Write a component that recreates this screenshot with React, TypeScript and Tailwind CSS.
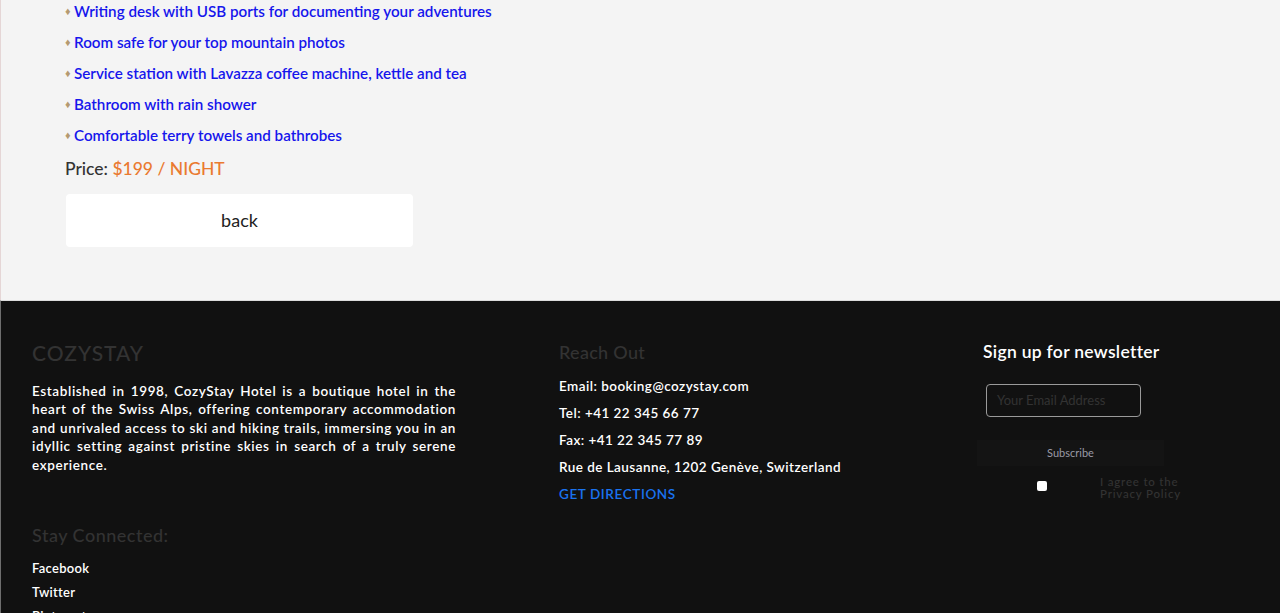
import React from "react";

const items = [
  "Writing desk with USB ports for documenting your adventures",
  "Room safe for your top mountain photos",
  "Service station with Lavazza coffee machine, kettle and tea",
  "Bathroom with rain shower",
  "Comfortable terry towels and bathrobes",
];

export default function App() {
  return (
    <div className="w-[1280px] h-[613px] overflow-hidden" style={{ fontFamily: "Lato, 'Noto Sans', sans-serif" }}>
      <section className="bg-[#f4f4f4] border-l border-[#e5d6d6] pl-[64px] pb-[53px]">
        <ul className="flex flex-col gap-[9px]">
          {items.map((t) => (
            <li key={t} className="flex items-center leading-[22px] text-[15.2px] font-semibold text-[#1616ec]">
              <span className="text-[11px] text-[#b59a70] w-[9px] leading-[22px]">♦</span>
              <span>{t}</span>
            </li>
          ))}
        </ul>
        <div className="mt-[11px] leading-[24px] text-[17.5px] font-medium">
          <span className="text-[#333]">Price: </span>
          <span className="text-[#ea7a30]">$199 / NIGHT</span>
        </div>
        <button className="mt-[13px] ml-[1px] w-[347px] h-[53px] bg-white rounded-[4px] text-[18px] text-[#222]">
          back
        </button>
      </section>
      <footer className="bg-[#111111] border-t border-[#dcdcdc] border-l border-l-[#6e6e6e] h-[313px] pt-[38px] pl-[31px] flex">
        <div className="w-[424px] flex flex-col">
          <div className="leading-[28px] text-[21px] tracking-[1px] text-[#333333] font-medium">COZYSTAY</div>
          <p className="mt-[15px] text-[13.5px] leading-[18.4px] font-semibold text-white tracking-[0.62px] text-justify">
            Established in 1998, CozyStay Hotel is a boutique hotel in the heart of the Swiss Alps, offering contemporary accommodation and unrivaled access to ski and hiking trails, immersing you in an idyllic setting against pristine skies in search of a truly serene experience.
          </p>
          <div className="mt-[49px] leading-[24px] text-[18px] tracking-[0.5px] text-[#333333] font-medium">Stay Connected:</div>
          <div className="mt-[9px] flex flex-col text-[13px] font-semibold text-white leading-[24px] tracking-[0.3px]">
            <a>Facebook</a>
            <a>Twitter</a>
            <a>Pinterest</a>
          </div>
        </div>
        <div className="ml-[103px] w-[424px] flex flex-col">
          <div className="leading-[24px] text-[18px] text-[#333333] font-medium tracking-[0.3px] mt-[1px]">Reach Out</div>
          <div className="mt-[9px] flex flex-col text-[13.5px] font-semibold text-white leading-[27px] tracking-[0.45px]">
            <span>Email: booking@cozystay.com</span>
            <span>Tel: +41 22 345 66 77</span>
            <span>Fax: +41 22 345 77 89</span>
            <span>Rue de Lausanne, 1202 Genève, Switzerland</span>
            <span className="text-[#1a73f0] tracking-[0.6px]">GET DIRECTIONS</span>
          </div>
        </div>
        <div className="flex flex-col">
          <div className="leading-[24px] text-[17.5px] text-white font-semibold tracking-[0.3px] mt-[1px]">Sign up for newsletter</div>
          <div className="mt-[20px] ml-[3px] w-[155px] h-[33px] border border-[#9a9a9a] rounded-[4px] flex items-center pl-[10px] text-[13px] text-[#333333]">
            Your Email Address
          </div>
          <div className="mt-[23px] ml-[-6px] w-[187px] h-[26px] bg-[#141414] flex items-center justify-center text-[11px] text-[#9a9aa6]">
            Subscribe
          </div>
          <div className="mt-[10px] flex items-start">
            <span className="ml-[54px] mt-[5px] w-[10px] h-[10px] bg-white rounded-[2px]"></span>
            <span className="ml-[53px] text-[11.5px] leading-[12px] text-[#333333] tracking-[0.8px] font-medium">
              I agree to the<br />Privacy Policy
            </span>
          </div>
        </div>
      </footer>
    </div>
  );
}
